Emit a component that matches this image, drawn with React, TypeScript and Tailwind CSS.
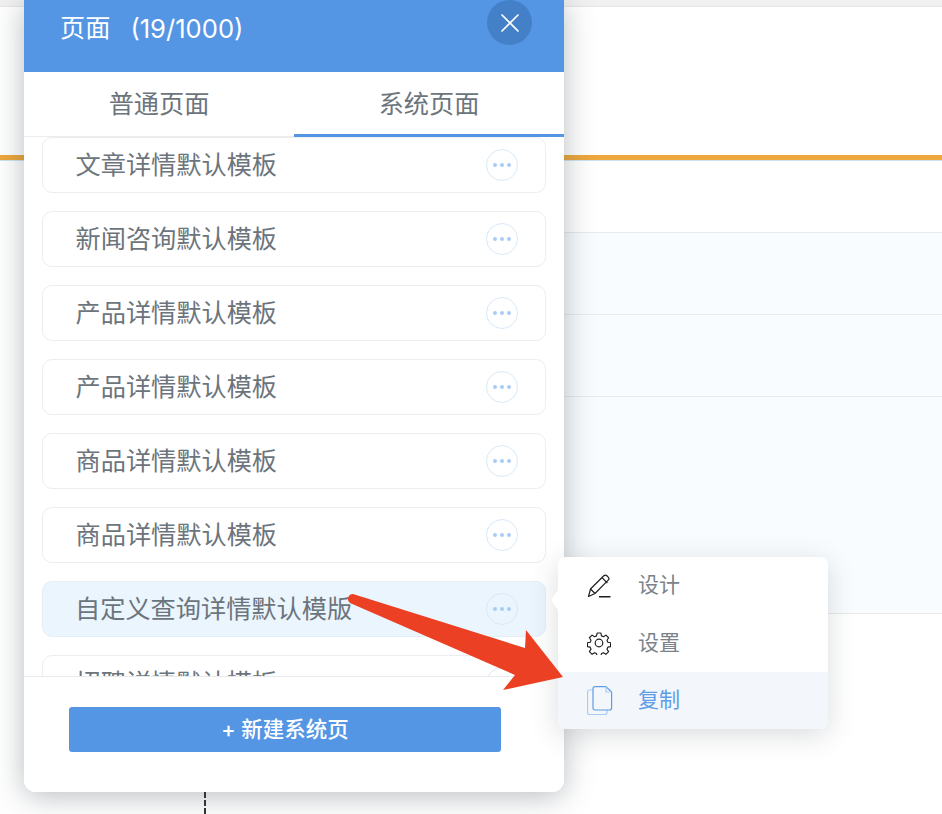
import React from "react";

const cjk = { fontFamily: '"Inter", "Noto Sans CJK SC", sans-serif' };

const pages = [
  "文章详情默认模板",
  "新闻咨询默认模板",
  "产品详情默认模板",
  "产品详情默认模板",
  "商品详情默认模板",
  "商品详情默认模板",
  "自定义查询详情默认模版",
  "招聘详情默认模板",
];

function PageRow({ name, active }: { name: string; active: boolean }) {
  return (
    <div
      className={
        "flex h-[56px] shrink-0 items-center justify-between rounded-[10px] border pr-[27px] " +
        (active ? "border-[#e6eef5] bg-[#eaf5fe] pl-[32px]" : "border-[#ebedf0] bg-white pl-[32.5px]")
      }
    >
      <span className="pt-[2px] text-[25.2px] leading-none text-[#6c747c]">{name}</span>
      <div className="flex h-[32px] w-[32px] items-center justify-center gap-[3px] rounded-full border border-[#d9e9f9] bg-transparent">
        <i className="h-[4px] w-[4px] rounded-full bg-[#a9cdf2]" />
        <i className="h-[4px] w-[4px] rounded-full bg-[#a9cdf2]" />
        <i className="h-[4px] w-[4px] rounded-full bg-[#a9cdf2]" />
      </div>
    </div>
  );
}

function PencilIcon() {
  return (
    <svg width="24" height="24" viewBox="0 0 24 24" fill="none" stroke="#1f1f1f" strokeWidth="1.2" strokeLinejoin="round">
      <path d="M1.5 22.500 3.500 15 16.800 1.800a2.200 2.200 0 0 1 3.100 0l1.300 1.300a2.200 2.200 0 0 1 0 3.100L8 19.500Z" />
      <path d="M3.500 15 8 19.500M15 3.600l5.400 5.400" />
      <path d="M12 22.800h11.500" strokeWidth="1.500" />
    </svg>
  );
}

function GearIcon() {
  return (
    <svg width="24" height="24" viewBox="0 0 24 24" fill="none" stroke="#1f1f1f" strokeWidth="1.200" strokeLinejoin="round">
      <path d="M10 1.500h4l.6 3 2.100.9 2.600-1.700 2.800 2.800-1.700 2.600.9 2.100 2.900.6v4l-2.900.6-.9 2.100 1.700 2.600-2.800 2.800-2.600-1.700-2.100.9-.6 2.900h-4l-.6-2.900-2.100-.9-2.600 1.700-2.800-2.800 1.700-2.600-.9-2.100-2.900-.6v-4l2.900-.6.9-2.100-1.700-2.600 2.800-2.800 2.600 1.700 2.100-.9Z" transform="translate(0.600 0.600) scale(0.95)" />
      <circle cx="12" cy="12" r="3.800" />
    </svg>
  );
}

function CopyIcon() {
  return (
    <svg width="26" height="29" viewBox="0 0 26 29" fill="none" stroke="#5e9de8" strokeWidth="1.200" strokeLinejoin="round">
      <path d="M6 4H2.500a2 2 0 0 0-2 2v20.500a2 2 0 0 0 2 2h15.500a2 2 0 0 0 2-2V24" stroke="#a9cbf3" />
      <path d="M8 .6h11L24.600 6v16a2 2 0 0 1-2 2H8a2 2 0 0 1-2-2V2.600a2 2 0 0 1 2-2Z" />
      <path d="M19 .6V6h5.600" stroke="#a9cbf3" />
    </svg>
  );
}

function MenuItem({ icon, label, active }: { icon: React.ReactNode; label: string; active?: boolean }) {
  return (
    <div className={"flex items-center pl-[29px] " + (active ? "h-[57px] bg-[#f3f6fb]" : "h-[57.5px] bg-white")}>
      <div className="flex w-[51px] items-center">{icon}</div>
      <span className={"pb-[2px] text-[21px] leading-none " + (active ? "text-[#5e9de8]" : "text-[#7b828a]")}>{label}</span>
    </div>
  );
}

export default function App() {
  return (
    <div className="relative h-[814px] w-[942px] overflow-hidden bg-white" style={cjk}>
      {/* page behind the drawer */}
      <div className="h-[7px] border-b border-[#e6e6e6] bg-[#f1f1f1]" />
      <div className="h-[148px]" />
      <div className="h-[6px] border-b border-[#cfe2ef] bg-[#eda73c]" />
      <div className="h-[71px]" />
      <div className="ml-[564px] border-b border-[#e8eaec]">
        <div className="h-[83px] border-y border-[#e8eaec] bg-[#f9fcfe]" />
        <div className="h-[82px] border-b border-[#e8eaec] bg-[#f9fcfe]" />
        <div className="h-[216px] bg-[#f9fcfe]" />
      </div>
      <div className="absolute left-[204px] top-[792px] h-[22px] border-l-2 border-dashed border-[#333]" />

      {/* pages drawer */}
      <div className="absolute left-[24px] top-0 flex h-[792px] w-[540px] flex-col overflow-hidden rounded-b-[12px] bg-white shadow-[0_4px_30px_rgba(50,60,70,0.35)]">
        <div className="flex h-[72px] shrink-0 items-start justify-between bg-[#5495e4] pl-[36px] pr-[32px] text-white">
          <div className="flex h-[57px] items-center text-[25.2px] leading-none">
            <span>页面</span>
            <span className="ml-[20px] text-[25.6px]">(19/1000)</span>
          </div>
          <div className="flex h-[45px] w-[45px] items-center justify-center rounded-full bg-[#4480c8]">
            <svg width="20" height="20" viewBox="0 0 20 20" stroke="white" strokeWidth="1.700" strokeLinecap="round">
              <path d="M2 2l16 16M18 2 2 18" />
            </svg>
          </div>
        </div>
        <div className="flex h-[65px] shrink-0 text-[25.2px] leading-none text-[#6c747c]">
          <div className="flex w-[270px] items-center justify-center border-b border-[#ececec] pt-[2px]">普通页面</div>
          <div className="flex w-[270px] items-center justify-center border-b-[3px] border-[#5495e4] pt-[4px]">系统页面</div>
        </div>
        <div className="flex flex-1 flex-col gap-[18px] overflow-hidden px-[18px]">
          {pages.map((name, i) => (
            <PageRow key={i} name={name} active={i === 6} />
          ))}
        </div>
        <div className="h-[116px] shrink-0 border-t border-[#e8eaec] bg-white pl-[45px] pt-[30px]">
          <div className="flex h-[45px] w-[432px] items-center justify-center rounded-[3px] bg-[#5495e4] text-[21.5px] font-medium leading-none text-white">
            + 新建系统页
          </div>
        </div>
      </div>

      {/* popover menu */}
      <div className="absolute left-[558px] top-[557px] w-[270px] rounded-[8px] shadow-[0_6px_28px_rgba(50,60,70,0.18)]">
        <div className="absolute left-[-7px] top-[33px] h-0 w-0 border-y-[10px] border-r-[7px] border-y-transparent border-r-white" />
        <div className="overflow-hidden rounded-[8px]">
          <MenuItem icon={<PencilIcon />} label="设计" />
          <MenuItem icon={<GearIcon />} label="设置" />
          <MenuItem icon={<CopyIcon />} label="复制" active />
        </div>
      </div>

      {/* annotation arrow */}
      <svg className="absolute left-0 top-0" width="942" height="814" fill="#ec4024">
        <path d="M353 594 525 648 526 630 563 677 503 690 515 675 350 603a5 5 0 0 1 3-9Z" />
      </svg>
    </div>
  );
}
